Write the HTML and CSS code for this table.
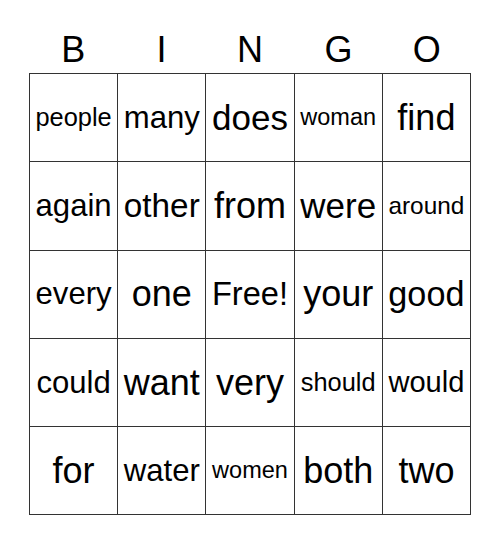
FILE: index.html
```html
<!DOCTYPE html>
<html>
<head>
<meta charset="utf-8">
<link rel="stylesheet" href="styles.css">
</head>
<body>
<div class="card">
  <div class="head">
    <span>B</span><span>I</span><span>N</span><span>G</span><span>O</span>
  </div>
  <div class="board">
    <div class="cell s25">people</div>
    <div class="cell s31">many</div>
    <div class="cell s35">does</div>
    <div class="cell s23">woman</div>
    <div class="cell">find</div>

    <div class="cell s31">again</div>
    <div class="cell s33">other</div>
    <div class="cell">from</div>
    <div class="cell s35">were</div>
    <div class="cell s24">around</div>

    <div class="cell s31">every</div>
    <div class="cell">one</div>
    <div class="cell s32">Free!</div>
    <div class="cell">your</div>
    <div class="cell s34">good</div>

    <div class="cell s31">could</div>
    <div class="cell">want</div>
    <div class="cell">very</div>
    <div class="cell s25">should</div>
    <div class="cell s29">would</div>

    <div class="cell">for</div>
    <div class="cell s31">water</div>
    <div class="cell s23">women</div>
    <div class="cell">both</div>
    <div class="cell">two</div>
  </div>
</div>
</body>
</html>
```

FILE: styles.css
```css
html, body {
  margin: 0;
  padding: 0;
  background: #fff;
}
body {
  font-family: "Liberation Sans", Arial, sans-serif;
  color: #000;
}
.card {
  width: 442px;
  margin: 0 auto;
  padding-top: 27px;
}
.head {
  display: grid;
  grid-template-columns: repeat(5, 1fr);
  font-size: 36px;
  line-height: 46px;
  text-align: center;
}
.board {
  display: grid;
  grid-template-columns: repeat(5, 1fr);
  grid-auto-rows: 88.3px;
  border-top: 1px solid #333;
  border-left: 1px solid #333;
}
.cell {
  display: flex;
  align-items: center;
  justify-content: center;
  border-right: 1px solid #333;
  border-bottom: 1px solid #333;
  font-size: 36px;
  white-space: nowrap;
  overflow: hidden;
}
.s23 { font-size: 23.5px; }
.s24 { font-size: 24.4px; }
.s25 { font-size: 25.4px; }
.s29 { font-size: 29.1px; }
.s31 { font-size: 31.1px; }
.s32 { font-size: 32.6px; }
.s33 { font-size: 33.3px; }
.s34 { font-size: 34.2px; }
.s35 { font-size: 35px; }
```
